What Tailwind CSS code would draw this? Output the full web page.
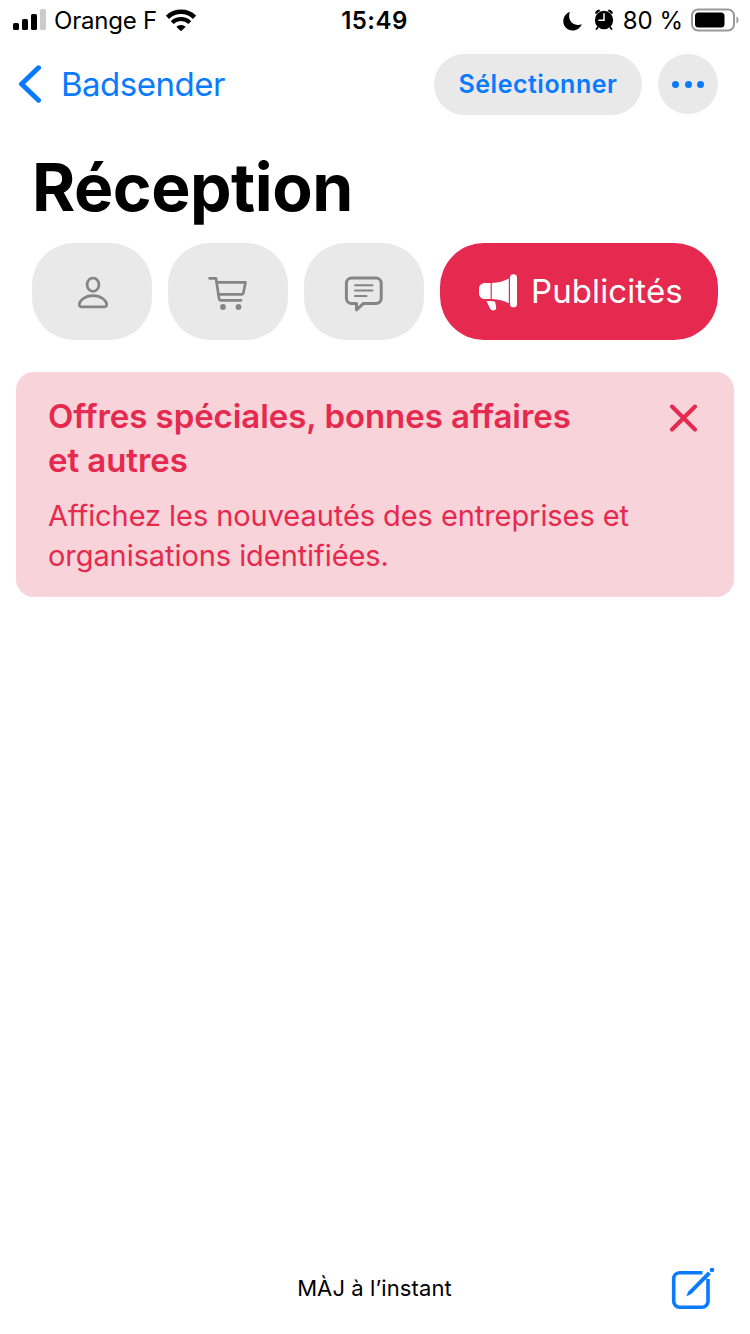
<!DOCTYPE html>
<html lang="fr">
<head>
  <meta charset="UTF-8" />
  <meta name="viewport" content="width=device-width, initial-scale=1.0" />
  <title>Réception</title>
  <script src="https://cdn.jsdelivr.net/npm/@tailwindcss/browser@4"></script>
</head>
<body class="bg-white text-black font-['Inter','Liberation_Sans',sans-serif]">
  <div class="w-[750px] h-[1334px] flex flex-col overflow-hidden">

    <!-- Status bar -->
    <div class="h-10 shrink-0 grid grid-cols-[1fr_auto_1fr] items-center pl-[13px] pr-[11px] text-[24px] whitespace-nowrap">
      <div class="flex items-center">
        <svg class="w-[33px] h-[22px] mr-[8px]" viewBox="0 0 33 22">
          <rect x="0" y="14" width="6" height="7" rx="1.6" />
          <rect x="9" y="10" width="6" height="11" rx="1.6" />
          <rect x="18" y="5" width="6" height="16" rx="1.6" />
          <rect x="27" y="0" width="6" height="21" rx="1.6" fill="#cccccc" />
        </svg>
        <span class="tracking-[-0.2px] leading-[38px] pt-0.5">Orange F</span>
        <svg class="w-[30px] h-[23px] ml-[9px]" viewBox="0 0 30 23" fill="none" stroke="#000">
          <path d="M1.400 8.300a19.500 19.500 0 0 1 27.200 0" stroke-width="4.600" />
          <path d="M6.200 13.600a12.500 12.500 0 0 1 17.600 0" stroke-width="4" />
          <path d="M10.300 17.800a6.800 6.800 0 0 1 9.400 0L15 22.300z" fill="#000" stroke="none" />
        </svg>
      </div>
      <div class="font-semibold tracking-[0.5px] leading-[38px] pt-0.5 mr-[3px]">15:49</div>
      <div class="flex items-center justify-end">
        <svg class="w-[20px] h-[20px] mr-[11px] mt-0.5" viewBox="0 0 20 20">
          <path d="M7 .8C2.900 2.400 .3 6 .3 10.200c0 5.200 4.200 9.300 9.300 9.300 4.200 0 7.800-2.700 9.200-6.300-1.200.5-2.400.7-3.600.7-5.300 0-9.100-3.900-9.100-9 0-1.400.3-2.900.9-4.100z" />
        </svg>
        <svg class="w-[20px] h-[22px] mr-[9px]" viewBox="0 0 20 22">
          <circle cx="10" cy="11" r="9.200" />
          <path d="M1.800 4.600A2.800 2.800 0 0 1 6 1.600zM18.200 4.600A2.800 2.800 0 0 0 14 1.600z" stroke="#000" stroke-linejoin="round" />
          <path d="M3.800 18.200l-1.300 1.800M16.200 18.200l1.300 1.800" stroke="#000" stroke-width="1.800" stroke-linecap="round" />
          <path d="M10 4.800v6.500H5" fill="none" stroke="#fff" stroke-width="1.500" stroke-linecap="round" />
        </svg>
        <span class="mr-[8px] leading-[38px] pt-0.5">80 %</span>
        <svg class="w-[48px] h-[24px]" viewBox="0 0 48 24">
          <rect x="1" y="1.500" width="42" height="21" rx="6" fill="none" stroke="#999" stroke-width="2" />
          <rect x="4" y="4.500" width="29.500" height="15" rx="3.500" />
          <path d="M45.500 8.500c2.600 1.200 2.600 5.800 0 7z" fill="#999" />
        </svg>
      </div>
    </div>

    <!-- Navigation -->
    <div class="h-[104px] shrink-0 flex items-start pt-[14px] pl-[18px] pr-8 text-[#0a7aff]">
      <div class="flex items-center h-[60px]">
        <svg class="w-[24px] h-[40px] mr-[19px]" viewBox="0 0 24 40" fill="none" stroke="currentColor" stroke-width="5" stroke-linecap="round" stroke-linejoin="round">
          <path d="M20.500 3.800L3.500 20l17 16.200" />
        </svg>
        <span class="text-[33px] leading-[50px] tracking-[-0.5px]">Badsender</span>
      </div>
      <div class="ml-auto w-[208px] h-[61px] rounded-full bg-[#e9e9e9] flex items-center justify-center text-[25px] font-semibold tracking-[0.5px]">Sélectionner</div>
      <div class="ml-4 w-[60px] h-[60px] rounded-full bg-[#e9e9e9] flex items-center justify-center gap-[5.500px]">
        <span class="w-[7px] h-[7px] rounded-full bg-[#0a7aff]"></span>
        <span class="w-[7px] h-[7px] rounded-full bg-[#0a7aff]"></span>
        <span class="w-[7px] h-[7px] rounded-full bg-[#0a7aff]"></span>
      </div>
    </div>

    <h1 class="h-[99px] shrink-0 pl-8 text-[66px] leading-[86px] font-bold tracking-[-0.5px]">Réception</h1>

    <!-- Category chips -->
    <div class="flex shrink-0 gap-4 px-8 h-[97px]">
      <div class="w-[120px] rounded-[42px] bg-[#e9e9e9] flex items-center justify-center">
        <svg class="w-[40px] h-[40px] ml-px" viewBox="0 0 40 40" fill="none" stroke="#858585" stroke-width="2.700" stroke-linejoin="round">
          <ellipse cx="20" cy="12.700" rx="5.900" ry="6.700" />
          <path d="M8.700 34.800c-1.600 0-2.400-.8-2.400-2.200 0-3.600 5.200-9 13.700-9s13.700 5.400 13.700 9c0 1.400-.8 2.200-2.400 2.200z" />
        </svg>
      </div>
      <div class="w-[120px] rounded-[42px] bg-[#e9e9e9] flex items-center justify-center">
        <svg class="w-[40px] h-[40px]" viewBox="0 0 40 40" fill="none" stroke="#858585" stroke-width="2.700" stroke-linecap="round" stroke-linejoin="round">
          <path d="M1.500 6.300H8L11 26.200Q11.400 28.300 13.200 28.300H33" />
          <path d="M9 10.300H37.500L35.500 20.600Q35.200 22.400 33.400 22.400H10.500" />
          <circle cx="15" cy="35" r="2.900" fill="#858585" stroke="none" />
          <circle cx="30.500" cy="35" r="2.900" fill="#858585" stroke="none" />
        </svg>
      </div>
      <div class="w-[120px] rounded-[42px] bg-[#e9e9e9] flex items-center justify-center">
        <svg class="w-[40px] h-[40px]" viewBox="0 0 40 40" fill="none" stroke="#858585" stroke-width="3" stroke-linecap="round" stroke-linejoin="round">
          <path d="M7.600 6h24.400a5.200 5.200 0 0 1 5.200 5.200v15a5.200 5.200 0 0 1-5.200 5.200H19.500L12.500 37.800v-6.400H7.600a5.200 5.200 0 0 1-5.200-5.200V11.200A5.200 5.200 0 0 1 7.600 6z" />
          <path d="M11 13.200h17.500M11 18.600h17.500M11 24h11.500" stroke-width="2" />
        </svg>
      </div>
      <div class="w-[278px] rounded-[44px] bg-[#e6294e] flex items-center pl-[38px] text-white">
        <svg class="w-[40px] h-[40px] mr-[13px]" viewBox="0 0 40 40" fill="#fff">
          <rect x="32" y="2.300" width="7" height="33" rx="3.400" />
          <path d="M30.800 6.500v24.800C26 28.600 20.500 27.300 13.800 27V11C20.500 10.700 26 9.300 30.800 6.500z" />
          <path d="M12.600 11v16H7.200C3.600 27 1 24.700 1 21.400v-4.800C1 13.300 3.600 11 7.200 11z" />
          <path d="M8.500 29c3.500-.2 6.300 0 8.500.6l1.100 5.200c.5 2.200-.7 3.600-2.700 3.600-1.700 0-2.900-.8-3.600-2.400z" />
        </svg>
        <span class="text-[33px] tracking-[0.1px]">Publicités</span>
      </div>
    </div>

    <!-- Category banner -->
    <div class="mt-8 mx-4 h-[225px] shrink-0 rounded-[18px] bg-[#f8d3da] text-[#e6294e] flex items-start justify-between pl-8 pr-9 pt-[22px]">
      <div class="whitespace-nowrap">
        <div class="text-[33px] leading-[44px] font-semibold tracking-[-0.06px]">Offres spéciales, bonnes affaires<br />et autres</div>
        <div class="mt-3.5 text-[29px] leading-10 tracking-[-0.07px]">Affichez les nouveautés des entreprises et<br />organisations identifiées.</div>
      </div>
      <svg class="w-[28px] h-[28px] mt-[10px]" viewBox="0 0 28 28" stroke="currentColor" stroke-width="4" stroke-linecap="round">
        <path d="M2 2.500l23 23M25 2.500l-23 23" />
      </svg>
    </div>

    <!-- Toolbar -->
    <div class="mt-auto h-[92px] shrink-0 grid grid-cols-[1fr_auto_1fr] items-center px-8">
      <div></div>
      <div class="text-[22px] tracking-[0.1px] mr-px">MÀJ à l’instant</div>
      <svg class="w-[48px] h-[48px] justify-self-end" viewBox="0 0 48 48" fill="none" stroke="#0a7aff" stroke-width="3.600" stroke-linecap="butt">
        <path d="M32.500 8.700H9.500A6 6 0 0 0 3.700 14.700v22.500a6 6 0 0 0 6 6H32a6 6 0 0 0 6-6V15" />
        <path d="M38 7.400l2.900 2.900L21 30.200l-4.700 2.100 2-4.900z" fill="#0a7aff" stroke="none" />
        <circle cx="42" cy="6" r="2.300" fill="#0a7aff" stroke="none" />
      </svg>
    </div>
  </div>
</body>
</html>
